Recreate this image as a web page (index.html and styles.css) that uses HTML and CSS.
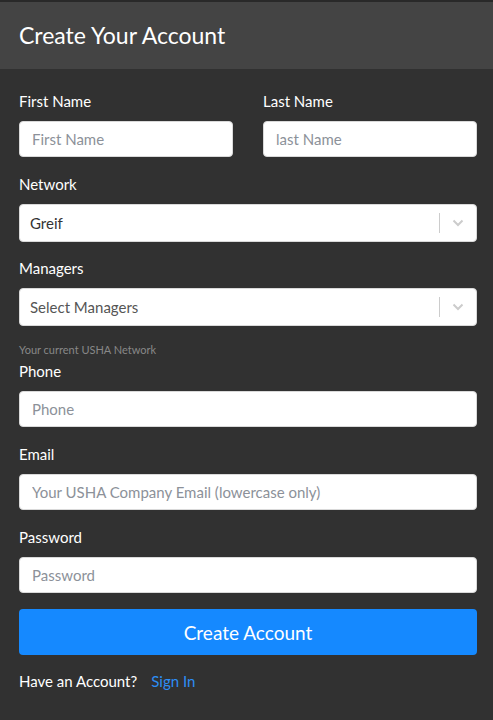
FILE: index.html
```html
<!DOCTYPE html>
<html lang="en">
<head>
<meta charset="utf-8">
<title>Create Your Account</title>
<link rel="stylesheet" href="styles.css">
</head>
<body>
<div class="page">
  <header class="head"><h1 class="title">Create Your Account</h1></header>
  <form class="form">
    <div class="row">
      <div class="group">
        <label class="label">First Name</label>
        <input class="input" type="text" placeholder="First Name">
      </div>
      <div class="group">
        <label class="label">Last Name</label>
        <input class="input" type="text" placeholder="last Name">
      </div>
    </div>
    <div class="group group-sel">
      <label class="label">Network</label>
      <div class="select">
        <span class="select-value">Greif</span>
        <span class="select-sep"></span>
        <svg class="chev" width="12" height="8" viewBox="0 0 12 8"><path d="M1.5 1.5 L6 6 L10.5 1.5" fill="none" stroke="#cccccc" stroke-width="2"/></svg>
      </div>
    </div>
    <div class="group group-tight">
      <label class="label">Managers</label>
      <div class="select">
        <span class="select-value select-ph">Select Managers</span>
        <span class="select-sep"></span>
        <svg class="chev" width="12" height="8" viewBox="0 0 12 8"><path d="M1.5 1.5 L6 6 L10.5 1.5" fill="none" stroke="#cccccc" stroke-width="2"/></svg>
      </div>
    </div>
    <p class="help">Your current USHA Network</p>
    <div class="group">
      <label class="label">Phone</label>
      <input class="input" type="text" placeholder="Phone">
    </div>
    <div class="group">
      <label class="label">Email</label>
      <input class="input" type="text" placeholder="Your USHA Company Email (lowercase only)">
    </div>
    <div class="group group-last">
      <label class="label">Password</label>
      <input class="input" type="password" placeholder="Password">
    </div>
    <button class="btn" type="button">Create Account</button>
    <div class="foot">
      <span>Have an Account?</span>
      <a class="link" href="#">Sign In</a>
    </div>
  </form>
</div>
</body>
</html>
```

FILE: styles.css
```css
* { box-sizing: border-box; }
html, body {
  margin: 0;
  padding: 0;
  background: #313131;
  font-family: Lato, "Open Sans", sans-serif;
}
.page {
  border-top: 2px solid #292929;
  min-height: 720px;
  background: #313131;
}
.head {
  background: #444444;
  height: 67px;
  padding: 0 19px;
  display: flex;
  align-items: center;
}
.title {
  margin: 0;
  color: #ffffff;
  font-weight: 400;
  font-size: 23px;
  line-height: 28px;
  position: relative;
  top: -1px;
}
.form {
  padding: 22px 16px 0 19px;
}
.row {
  display: grid;
  grid-template-columns: 1fr 1fr;
  column-gap: 30px;
}
.group {
  display: flex;
  flex-direction: column;
  margin-bottom: 17px;
}
.group-sel { margin-bottom: 16px; }
.group-tight { margin-bottom: 17px; }
.group-last { margin-bottom: 16px; }
.label {
  color: #ffffff;
  font-size: 15px;
  line-height: 20px;
  margin-bottom: 10px;
}
.input {
  height: 36px;
  border: 1px solid #d9d9d9;
  border-radius: 4px;
  background: #ffffff;
  padding: 0 12px;
  font-family: Lato, "Open Sans", sans-serif;
  font-size: 15px;
  color: #333;
  outline: none;
}
.input::placeholder { color: #8c9199; }
.select {
  height: 38px;
  border: 1px solid #d9d9d9;
  border-radius: 4px;
  background: #ffffff;
  display: flex;
  align-items: center;
  padding-left: 10px;
}
.select-value {
  flex: 1;
  font-size: 15px;
  color: #333333;
}
.select-ph { color: #555555; }
.select-sep {
  width: 1px;
  height: 20px;
  background: #cccccc;
}
.chev {
  margin: 0 12px 0 12px;
}
.help {
  margin: 0 0 4px 0;
  font-size: 11px;
  line-height: 14px;
  color: #888888;
}
.btn {
  display: block;
  width: 100%;
  height: 46px;
  border: none;
  border-radius: 4px;
  background: #1589ff;
  color: #ffffff;
  font-family: Lato, "Open Sans", sans-serif;
  font-size: 19px;
  cursor: pointer;
}
.foot {
  margin-top: 16px;
  display: flex;
  gap: 14px;
  color: #ffffff;
  font-size: 15px;
  line-height: 20px;
}
.link {
  color: #2d8ef5;
  text-decoration: none;
}
```
